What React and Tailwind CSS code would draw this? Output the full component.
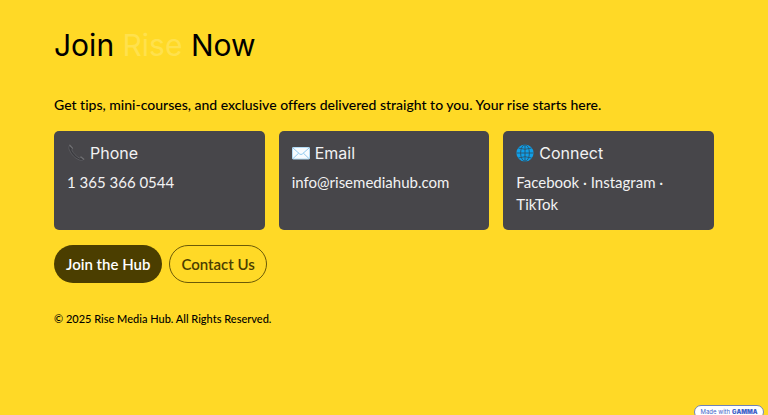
import React from 'react';

const PhoneIcon = () => (
    <svg viewBox="0 0 18 18" className="h-[18px] w-[18px] shrink-0" aria-hidden="true">
        <path
            d="M2.6 1.8 C1.6 2.8 1.6 4.2 2.3 5.8 C4.2 10.4 7.6 14.2 12.4 16 C14 16.6 15.4 16.6 16.6 15.4 L14.2 13.4 L12.4 14 C9.2 12.4 6.4 9.4 4.8 6 L5.4 4.2 Z"
            fill="#3b3b3f"
            stroke="#606064"
            strokeWidth="0.8"
        />
        <path d="M2.8 1.3 L5.5 4.1 M14 13 L16.8 15.2" stroke="#6e6e71" strokeWidth="1.3" strokeLinecap="round" />
    </svg>
);

const EmailIcon = () => (
    <svg viewBox="0 0 18 18" className="h-[18px] w-[18px] shrink-0" aria-hidden="true">
        <rect x="0.5" y="3.5" width="17" height="11.5" rx="0.6" fill="#f7fbfe" stroke="#b5dcf5" />
        <path
            d="M1 14.6 L6.6 9.2 M17 14.6 L11.4 9.2 M1 4 L7.7 10 Q9 11 10.3 10 L17 4"
            fill="none"
            stroke="#83c3ec"
            strokeWidth="0.9"
        />
    </svg>
);

const GlobeIcon = () => (
    <svg viewBox="0 0 18 18" className="h-[18px] w-[18px] shrink-0" aria-hidden="true">
        <circle cx="9" cy="9" r="8.6" fill="#109fe8" />
        <g fill="none" stroke="#2b536b" strokeWidth="0.9">
            <ellipse cx="9" cy="9" rx="4.4" ry="8.2" />
            <path d="M9 .5 V17.5 M.5 9 H17.5 M2.4 4 Q9 6.6 15.6 4 M2.4 14 Q9 11.4 15.6 14" />
        </g>
    </svg>
);

const contacts = [
    { title: 'Phone', icon: PhoneIcon, text: '1 365 366 0544' },
    { title: 'Email', icon: EmailIcon, text: 'info@risemediahub.com' },
    { title: 'Connect', icon: GlobeIcon, text: 'Facebook · Instagram · TikTok' },
];

const ContactCard = ({ title, icon: Icon, text }) => (
    <div className="rounded-[5px] bg-[#47464a] px-[13px] pt-3 pb-[15px] text-[#f2f2f3]">
        <h2 className="flex items-center gap-[5px] font-['Inter',sans-serif] text-base leading-5">
            <Icon />
            {title}
        </h2>
        <p className="mt-2 text-[15px] leading-[22px]">{text}</p>
    </div>
);

const App = () => {
    return (
        <div className="min-h-screen bg-[#ffd926] px-[54px] pt-[25px] pb-10 font-['Lato',sans-serif] text-black [font-variant-ligatures:none]">
            <h1 className="font-['Inter',sans-serif] text-[30px] leading-10 font-normal">
                Join <span className="text-[#ffe14d]">Rise</span> Now
            </h1>

            <p className="mt-7 text-sm leading-6 font-medium">
                Get tips, mini-courses, and exclusive offers delivered straight to you. Your rise starts here.
            </p>

            <div className="mt-[14px] grid grid-cols-3 gap-[14px]">
                {contacts.map((contact) => (
                    <ContactCard key={contact.title} {...contact} />
                ))}
            </div>

            <div className="mt-[15px] flex gap-[7px] text-[15px] font-semibold">
                <button type="button" className="h-[38px] rounded-full bg-[#4b3e00] px-3 text-white">
                    Join the Hub
                </button>
                <button type="button" className="h-[38px] rounded-full border border-[#6b5a08] px-[11px] text-[#4b3e00]">
                    Contact Us
                </button>
            </div>

            <footer className="mt-[26px] text-[11px] leading-5 font-medium">
                © 2025 Rise Media Hub. All Rights Reserved.
            </footer>

            {/* Badge peeking over the bottom edge */}
            <a
                href="#"
                className="fixed right-1 -bottom-1 flex h-[14px] w-[70px] items-center justify-center gap-[2px] rounded-full border border-[#6f83ba] bg-white font-['Inter',sans-serif] text-[6px] leading-none text-[#3f62c8]"
            >
                Made with <span className="font-black">GAMMA</span>
            </a>
        </div>
    );
};

export default App;
